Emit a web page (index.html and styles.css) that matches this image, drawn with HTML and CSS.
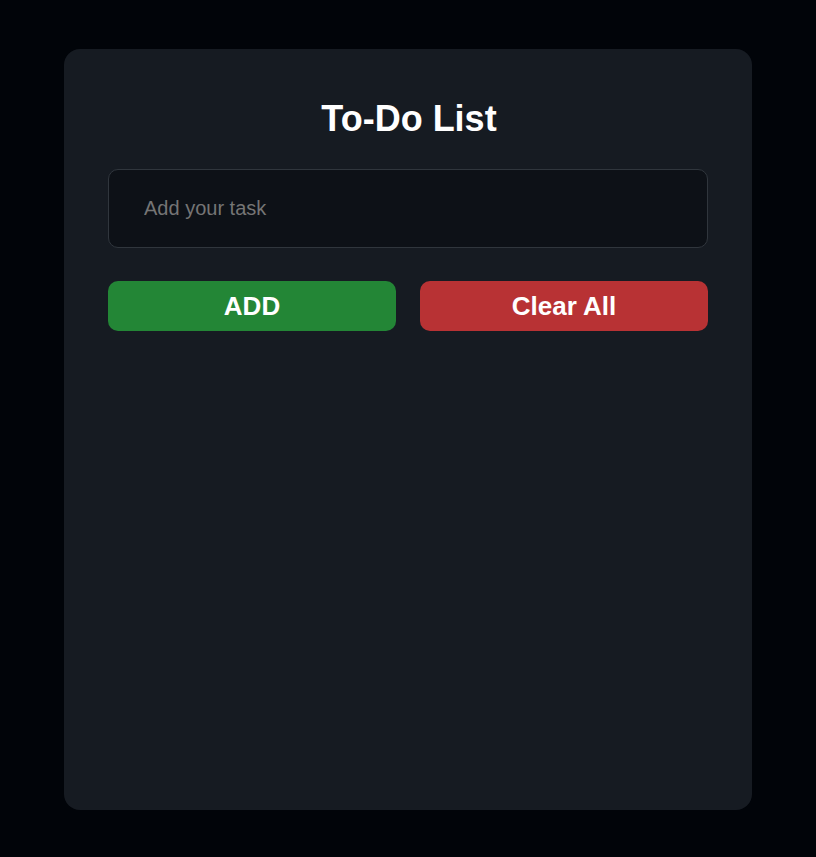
FILE: index.html
```html
<!DOCTYPE html>
<html lang="en">
<head>
<meta charset="utf-8">
<title>To-Do List</title>
<link rel="stylesheet" href="styles.css">
</head>
<body>
<main class="card">
  <h1 class="title">To-Do List</h1>
  <input class="task-input" type="text" placeholder="Add your task">
  <div class="actions">
    <button class="btn btn-add">ADD</button>
    <button class="btn btn-clear">Clear All</button>
  </div>
  <ul class="task-list"></ul>
</main>
</body>
</html>
```

FILE: styles.css
```css
* { box-sizing: border-box; }
html, body {
  margin: 0;
  padding: 0;
  background: #010409;
  font-family: "Liberation Sans", Arial, sans-serif;
}
body {
  padding-top: 49px;
}
.card {
  width: 688px;
  min-height: 761px;
  margin: 0 auto;
  background: #161b22;
  border-radius: 16px;
  padding: 44px;
  display: flex;
  flex-direction: column;
}
.title {
  margin: 5px 0 29px;
  padding-left: 2px;
  font-size: 36px;
  line-height: 42px;
  font-weight: 700;
  color: #ffffff;
  text-align: center;
}
.task-input {
  width: 100%;
  height: 79px;
  background: #0d1117;
  border: 1px solid #30363d;
  border-radius: 10px;
  padding: 0 35px;
  font-family: inherit;
  font-size: 20px;
  color: #e6edf3;
  outline: none;
}
.task-input::placeholder { color: #757575; }
.actions {
  margin-top: 33px;
  display: grid;
  grid-template-columns: 1fr 1fr;
  gap: 24px;
}
.btn {
  height: 50px;
  border: none;
  border-radius: 10px;
  color: #ffffff;
  font-family: inherit;
  font-size: 26px;
  font-weight: 700;
  cursor: pointer;
}
.btn-add { background: #238636; }
.btn-clear { background: #b83234; }
.task-list {
  list-style: none;
  margin: 0;
  padding: 0;
}
```
